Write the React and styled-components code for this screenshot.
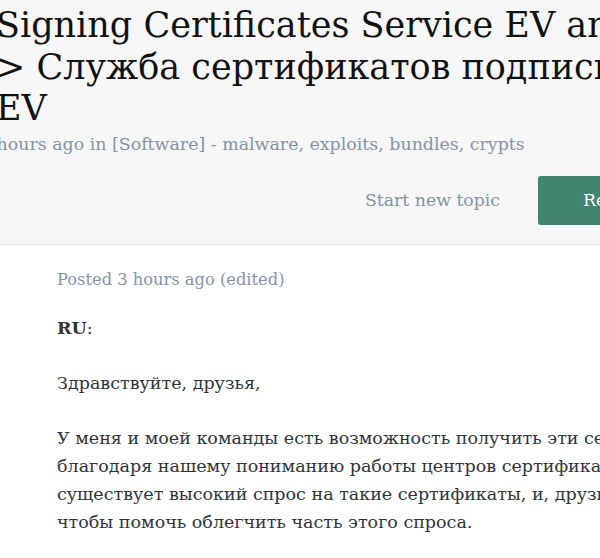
import React from "react";
import styled, { createGlobalStyle } from "styled-components";

const Global = createGlobalStyle`
  html, body { margin: 0; padding: 0; background: #ffffff; }
  body { font-family: "DejaVu Serif", serif; overflow: hidden; }
`;

const serif = `"DejaVu Serif", serif`;

const Page = styled.div`
  width: 600px;
  height: 558px;
  overflow: hidden;
  font-family: ${serif};
`;

const Header = styled.header`
  background: #f7f7f7;
  border-bottom: 1px solid #e3e3e3;
  height: 245px;
  box-sizing: border-box;
  padding-top: 5px;
`;

const Title = styled.h1`
  margin: 0 0 0 -4px;
  font-family: ${serif};
  font-size: 35px;
  font-weight: normal;
  line-height: 41.5px;
  color: #111111;
  white-space: nowrap;
`;

const Meta = styled.div`
  margin: 2px 0 0 -20px;
  font-family: ${serif};
  font-size: 17.4px;
  line-height: 24px;
  color: #8594a4;
  white-space: nowrap;
`;

const Actions = styled.div`
  display: flex;
  align-items: center;
  gap: 38px;
  margin-top: 20px;
  margin-left: 365px;
  white-space: nowrap;
`;

const TextLink = styled.span`
  font-family: ${serif};
  font-size: 17.3px;
  color: #8594a4;
`;

const Button = styled.span`
  display: inline-flex;
  align-items: center;
  height: 49px;
  padding: 0 45px;
  border-radius: 3px;
  background: #3f8570;
  color: #ffffff;
  font-family: ${serif};
  font-size: 17.3px;
`;

const Post = styled.article`
  padding: 23px 0 0 57px;
  white-space: nowrap;
`;

const Posted = styled.div`
  font-family: ${serif};
  font-size: 16.3px;
  line-height: 24px;
  color: #8594a4;
  margin-bottom: 22px;
`;

const Para = styled.p`
  margin: 0 0 27px;
  font-family: ${serif};
  font-size: 17.5px;
  line-height: 28px;
  color: #2f3438;
`;

export default function App() {
  return (
    <Page>
      <Global />
      <Header>
        <Title>
          Signing Certificates Service EV and OV &lt;
          <br />
          &gt; Служба сертификатов подписи кода
          <br />
          EV
        </Title>
        <Meta>3 hours ago in [Software] - malware, exploits, bundles, crypts</Meta>
        <Actions>
          <TextLink>Start new topic</TextLink>
          <Button>Reply to this topic</Button>
        </Actions>
      </Header>
      <Post>
        <Posted>Posted 3 hours ago (edited)</Posted>
        <Para>
          <strong>RU</strong>:
        </Para>
        <Para>Здравствуйте, друзья,</Para>
        <Para>
          У меня и моей команды есть возможность получить эти сертификаты
          <br />
          благодаря нашему пониманию работы центров сертификации. Сейчас
          <br />
          существует высокий спрос на такие сертификаты, и, друзья, мы здесь,
          <br />
          чтобы помочь облегчить часть этого спроса.
        </Para>
      </Post>
    </Page>
  );
}
